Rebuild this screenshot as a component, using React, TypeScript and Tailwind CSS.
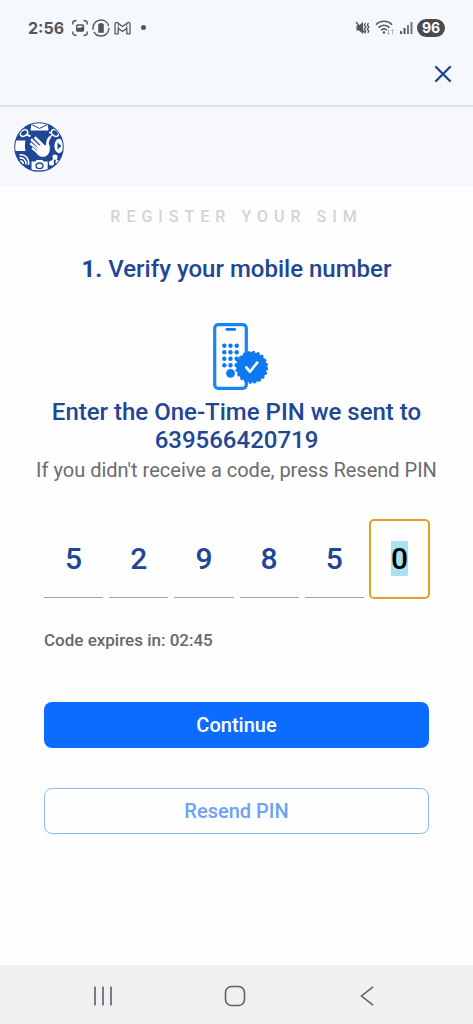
import { useEffect, useRef, useState } from "react";

const PIN = ["5", "2", "9", "8", "5", "0"];

function classNames(...classes: string[]) {
  return classes.filter(Boolean).join(" ");
}

function StatusBar() {
  return (
    <div className="flex h-[55px] items-center justify-between px-7 font-[Inter,sans-serif] text-[#55565a]">
      <div className="flex items-center gap-1">
        <span className="mr-1 text-base font-bold leading-6">2:56</span>
        {/* screenshot */}
        <svg className="h-4 w-4" viewBox="0 0 16 16" fill="none" stroke="currentColor" strokeWidth="1.4">
          <path d="M.8 4.5V3A2.2 2.2 0 0 1 3 .8h1.500M11.500 .8H13A2.2 2.2 0 0 1 15.200 3v1.500M15.200 11.500V13a2.200 2.200 0 0 1-2.200 2.200h-1.500M4.500 15.200H3A2.200 2.200 0 0 1 .8 13v-1.500" />
          <rect x="4.700" y="5" width="6.800" height="6" rx="1" />
          <path d="M5 10.500V9l2-.8 1.300.6L10 7.500l1.200 1v2z" fill="currentColor" />
        </svg>
        {/* battery saver */}
        <svg className="h-[18px] w-[18px]" viewBox="0 0 18 18" fill="none" stroke="currentColor">
          <circle cx="9" cy="9" r="8" strokeWidth="1.400" strokeDasharray="21 2 25 2.300" />
          <path d="M6.200 4.800h1.600V4h2.400v.8h1.600v9H6.200z" fill="currentColor" stroke="none" />
        </svg>
        {/* mail */}
        <svg className="h-[18px] w-[17px]" viewBox="0 0 17 18" fill="none" stroke="currentColor" strokeWidth="1.300" strokeLinejoin="round">
          <path d="M1 14.800V5.200C1 3.600 2.600 3 3.800 3.900l4.700 3.700 4.700-3.700c1.200-.9 2.800-.3 2.800 1.300v9.600h-3.200V9.200l-4.300 3.300-4.300-3.300v5.600z" />
          <path d="M4.200 9.200V4.500M12.800 9.200V4.500" strokeWidth=".8" />
        </svg>
        <span className="ml-1.5 h-[5px] w-[5px] rounded-full bg-[#55565a]" />
      </div>

      <div className="flex items-center gap-1">
        {/* muted, vibrating */}
        <svg className="h-4 w-4" viewBox="0 0 16 16" fill="none" stroke="currentColor" strokeWidth="1.300">
          <path d="M1.500 5.500H4l4-3.500v12l-4-3.500H1.500z" fill="currentColor" stroke="none" />
          <path d="M1 2l9 11" />
          <path d="M10.500 3l-1.200 2 1.500 2-1.500 2 1.500 2-1 2M13.500 3l-1.200 2 1.500 2-1.500 2 1.500 2-1 2" />
        </svg>
        <svg className="h-[17px] w-5" viewBox="0 0 20 17" fill="none" stroke="currentColor" strokeWidth="1.600">
          <path d="M1 5.800c4.500-4.700 11.500-4.700 16 0M3.500 8.600c3.200-3.200 7.800-3.200 11 0M6 11.300c1.800-1.800 4.200-1.800 6 0" />
          <circle cx="9" cy="13.500" r="1.200" fill="currentColor" stroke="none" />
          <path d="M13.500 10.500v5M12.200 14.200l1.300 1.300 1.300-1.300M17.500 15.500v-5M16.200 11.800l1.300-1.300 1.300 1.300" stroke="#b4b7bb" strokeWidth="1" />
        </svg>
        <svg className="h-[14px] w-[14px]" viewBox="0 0 14 14" fill="currentColor">
          <rect x="1" y="10" width="2" height="3" rx=".5" />
          <rect x="4.500" y="7" width="2" height="6" rx=".5" />
          <rect x="8" y="4" width="2" height="9" rx=".5" opacity=".8" />
          <rect x="11.500" y="1" width="2" height="12" rx=".5" opacity=".8" />
        </svg>
        <span className="flex h-[18px] w-7 items-center justify-center rounded-full bg-[#4a4b4e] text-sm font-bold leading-4 text-white">
          96
        </span>
      </div>
    </div>
  );
}

function Logo() {
  return (
    <svg className="h-[50px] w-[50px]" viewBox="0 0 50 50" aria-label="Home">
      <defs>
        <clipPath id="globe">
          <circle cx="25" cy="25" r="23.800" />
        </clipPath>
      </defs>
      <circle cx="25" cy="25" r="24.800" fill="#1f4796" />
      <g clipPath="url(#globe)" fill="#fff" stroke="none">
        {/* envelope */}
        <path d="M17.500 1h16l1 7.500h-18z" />
        <path d="M17.500 2.500l8 4 8-4" fill="none" stroke="#1f4796" strokeWidth="1" />
        {/* search + globe */}
        <g fill="none" stroke="#fff" strokeWidth="1.500">
          <ellipse cx="10" cy="11" rx="4" ry="2.800" transform="rotate(-35 10 11)" />
          <path d="M12.500 12.500l4 1.800" strokeWidth="2" />
          <ellipse cx="41" cy="11" rx="4" ry="2.800" transform="rotate(40 41 11)" />
          <path d="M38 13l-2.500 2.500M35 10.500l3 .5" />
        </g>
        {/* document and play */}
        <path d="M1 18.500h10.500c-.8 3.500-.8 7 0 10.500H1z" />
        <ellipse cx="45" cy="24" rx="4.600" ry="7.200" />
        <path d="M43.500 20.500l4 3.500-4 3.500z" fill="#1f4796" />
        {/* signal */}
        <g fill="none" stroke="#fff" strokeWidth="1.600">
          <path d="M5.500 33c5.500-1.500 10 3.500 9 10M5.500 36c4-.8 7 2.500 6.300 6.500M6 39c2-.2 3.300 1 3.100 3" />
        </g>
        {/* camera */}
        <path d="M17.500 39.500h4l1-1.500h6l1 1.500h4.200v9H17.500z" />
        <ellipse cx="25.500" cy="43.800" rx="3.500" ry="2.800" fill="none" stroke="#1f4796" strokeWidth="1.400" />
        {/* share */}
        <g stroke="#fff" strokeWidth="1.500">
          <path d="M41 35l-3.500 6M41 35l2.500 5.500" />
          <circle cx="41" cy="35" r="1.800" />
          <circle cx="37.500" cy="41" r="1.800" />
          <circle cx="43.500" cy="40" r="1.300" />
        </g>
      </g>
      {/* hand */}
      <path d="M23 23l8 .5 4-1.500c1.500 4 1 8.500-1.500 11-3 2.800-7.500 2.200-10-.5l-4-5z" fill="#fff" />
      <g fill="none" stroke="#fff" strokeWidth="2.800" strokeLinecap="round">
        <path d="M21.500 16l9 9M18 18l9 8.500M17.200 22l9 7M19 26.500l7 5.500" />
        <path d="M35.300 16c-2 2.500-2.200 5-1.800 9" />
      </g>
      <path d="M19 17.500l6.500 6M17.800 20.800l6 5M18.500 24.800l4.500 3.500" fill="none" stroke="#1f4796" strokeWidth=".7" />
    </svg>
  );
}

function PhoneIcon() {
  return (
    <svg className="h-[67px] w-[65px]" viewBox="-9 0 65 67" fill="#0d78f0" aria-hidden="true">
      <rect x="1.700" y="1.700" width="31.600" height="63.600" rx="3.500" fill="none" stroke="#1a84f5" strokeWidth="3.200" />
      <rect x="12.500" y="5" width="10.500" height="2.800" rx="1.200" />
      {[22.7, 29.2, 35.7, 42.2].map((y) =>
        [11.3, 17.5, 23.7].map((x) => <circle key={`${x}-${y}`} cx={x} cy={y} r="2.200" />)
      )}
      <circle cx="17.500" cy="50.300" r="4.400" />
      <circle cx="38.700" cy="44.300" r="15.200" />
      <circle cx="38.700" cy="44.300" r="15" fill="none" stroke="#0d78f0" strokeWidth="2.800" strokeDasharray="2.750 1.960" />
      <path d="M33.300 44.300l3.700 4.500 7.200-9.200" fill="none" stroke="#fff" strokeWidth="2.600" strokeLinecap="round" strokeLinejoin="round" />
    </svg>
  );
}

function PinInputs() {
  const [pin, setPin] = useState(PIN);
  const last = useRef<HTMLInputElement>(null);

  useEffect(() => {
    last.current?.focus();
    last.current?.select();
  }, []);

  return (
    <div className="grid grid-cols-6 gap-1.5">
      {pin.map((digit, i) => (
        <input
          key={i}
          ref={i === pin.length - 1 ? last : undefined}
          aria-label={`Digit ${i + 1}`}
          inputMode="numeric"
          maxLength={1}
          value={digit}
          onChange={(e) => setPin(pin.map((d, n) => (n === i ? e.target.value : d)))}
          className={classNames(
            "h-[78px] w-full min-w-0 border-b border-[#a3a3a3] text-center text-3xl font-medium text-[#1f4796]",
            "selection:bg-[#a9e1f2] selection:text-black focus:rounded-sm focus:border-transparent focus:outline-2 focus:-outline-offset-1 focus:outline-[#e3a021]"
          )}
        />
      ))}
    </div>
  );
}

function NavBar() {
  return (
    <nav className="flex h-[59px] items-center justify-between bg-[#f0f0f2] pl-[88px] pr-[91px] pt-0.5 text-[#5f6063]" aria-label="System">
      <button aria-label="Recents" className="flex w-[30px] justify-center">
        <svg className="h-5 w-5" viewBox="0 0 20 20" stroke="currentColor" strokeWidth="1.600">
          <path d="M2 .5v19M10 .5v19M18 .5v19" />
        </svg>
      </button>
      <button aria-label="Home">
        <svg className="h-[22px] w-[22px]" viewBox="0 0 22 22" fill="none" stroke="currentColor" strokeWidth="1.600">
          <rect x="1.500" y="1.500" width="19" height="19" rx="6" />
        </svg>
      </button>
      <button aria-label="Back" className="flex w-[30px] justify-center">
        <svg className="h-5 w-5" viewBox="0 0 20 20" fill="none" stroke="currentColor" strokeWidth="1.600">
          <path d="M16 .8L4.500 10 16 19.200" />
        </svg>
      </button>
    </nav>
  );
}

export default function App() {
  return (
    <div className="flex min-h-screen flex-col bg-[#fefefe] font-[Roboto,sans-serif]">
      <header className="border-b-2 border-[#dde0e5] bg-[#f5f9fd]">
        <StatusBar />
        <div className="flex h-[50px] items-start justify-end pr-5 pt-2">
          <button aria-label="Close" className="text-[#1f4796]">
            <svg className="h-5 w-5" viewBox="0 0 20 20" fill="none" stroke="currentColor" strokeWidth="2.400" strokeLinecap="round">
              <path d="M3 4l14 14M17 4L3 18" />
            </svg>
          </button>
        </div>
      </header>
      <div className="flex h-20 items-center bg-[#f7f8fb] px-3.5">
        <Logo />
      </div>

      <main className="flex flex-1 flex-col px-11 pt-5">
        <p className="text-center text-base font-medium uppercase leading-5 tracking-[6px] text-[#d3d4d5]">
          Register your SIM
        </p>
        <h1 className="mt-7 text-center text-2xl font-medium leading-7 text-[#1f4796]">
          <span className="font-bold">1.</span> Verify your mobile number
        </h1>
        <div className="mt-10 flex justify-center">
          <PhoneIcon />
        </div>
        <h2 className="mt-2 text-center text-2xl font-medium leading-7 text-[#1f4796]">
          Enter the One-Time PIN we sent to 639566420719
        </h2>
        <p className="-mx-6 mb-9 mt-0.5 text-center text-xl leading-7 text-[#6b6c6e]">
          If you didn't receive a code, press Resend PIN
        </p>
        <PinInputs />
        <p className="mt-8 text-[17px] font-medium leading-5 text-[#66686b]">Code expires in: 02:45</p>
        <button className="mt-[52px] h-[46px] rounded-lg bg-[#0b6cff] text-xl font-medium text-white">Continue</button>
        <button className="mb-10 mt-10 h-[46px] rounded-lg border border-[#8fb8ec] text-xl font-medium text-[#6ba3f5]">
          Resend PIN
        </button>
      </main>

      <NavBar />
    </div>
  );
}
